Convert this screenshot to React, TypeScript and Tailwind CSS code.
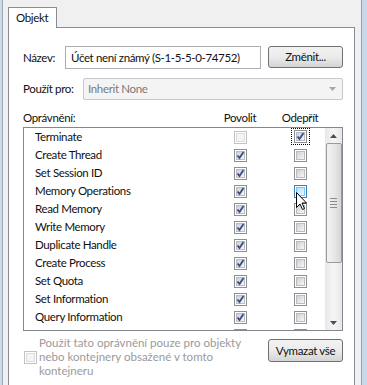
import React from "react";

type CbProps = { checked?: boolean; disabled?: boolean; hover?: boolean; focus?: boolean };

function Cb({ checked, disabled, hover, focus }: CbProps) {
  const outer = disabled ? "border-[#c2c2c2]" : hover ? "border-[#3c7fb1]" : "border-[#8e8f8f]";
  const inner = disabled
    ? "bg-[#f4f4f4] border-[#dcdcdc]"
    : hover
    ? "bg-gradient-to-br from-[#b1dffd] to-[#e9f7fe] border-[#79c6f9]"
    : "bg-gradient-to-br from-[#cdd0d6] to-[#f7f7f7] border-[#b9bdc3]";
  const box = (
    <div className={`relative w-[13px] h-[13px] border bg-white ${outer} flex items-center justify-center`}>
      <div className={`w-[9px] h-[9px] border ${inner}`} />
      {checked && (
        <svg className="absolute left-0 top-0" width="11" height="11" viewBox="0 0 11 11">
          <path d="M2.5 5.5 L4.5 8 L8.5 2" fill="none" stroke="#3b4f86" strokeWidth="1.9" strokeLinejoin="miter" />
        </svg>
      )}
    </div>
  );
  if (focus) {
    return <div className="border border-dotted border-black px-[2px] py-[1px]">{box}</div>;
  }
  return box;
}

const rows: { name: string; allow: boolean; allowDisabled?: boolean; deny: boolean; focus?: boolean; hover?: boolean }[] = [
  { name: "Terminate", allow: false, allowDisabled: true, deny: true, focus: true },
  { name: "Create Thread", allow: true, deny: false },
  { name: "Set Session ID", allow: true, deny: false },
  { name: "Memory Operations", allow: true, deny: false, hover: true },
  { name: "Read Memory", allow: true, deny: false },
  { name: "Write Memory", allow: true, deny: false },
  { name: "Duplicate Handle", allow: true, deny: false },
  { name: "Create Process", allow: true, deny: false },
  { name: "Set Quota", allow: true, deny: false },
  { name: "Set Information", allow: true, deny: false },
  { name: "Query Information", allow: true, deny: false },
  { name: "Query Limited Information", allow: false, deny: false },
];

export default function App() {
  const font = { fontFamily: "Lato, 'Open Sans', sans-serif" };
  return (
    <div className="w-[367px] h-[385px] bg-[#f0f0f0] flex overflow-hidden text-[11.5px] tracking-[-0.35px] text-[#111] leading-none" style={font}>
      {/* left frame */}
      <div className="w-[3px] h-full bg-[#cfdbe9] border-r border-[#9ca8b6] shrink-0" />
      <div className="flex-1 flex flex-col pl-[5px] pt-[7px]">
        {/* tab row */}
        <div className="flex h-[21px]">
          <div className="w-[49px] h-[21px] bg-white border border-b-0 border-[#898c95] flex items-center pl-[7px] relative z-10">
            Objekt
          </div>
        </div>
        {/* panel */}
        <div className="-mt-px w-[347px] flex-1 bg-white border border-[#898c95] border-b-0 pl-[14px] pr-[11px] pt-[18px] flex flex-col">
          {/* Název row */}
          <div className="flex items-center h-[23px]">
            <div className="w-[42px]">Název:</div>
            <div className="w-[196px] h-[23px] border border-[#abadb3] flex items-center pl-[5px] whitespace-nowrap">
              Účet není známý (S-1-5-5-0-74752)
            </div>
            <div className="ml-[7px] w-[75px] h-[22px] rounded-[3px] border border-[#707070] bg-gradient-to-b from-[#f2f2f2] via-[#ebebeb] to-[#d4d4d4] flex items-center justify-center self-start">
              Změnit...
            </div>
          </div>
          {/* Použít pro row */}
          <div className="flex items-center h-[22px] mt-[9px]">
            <div className="w-[60px] whitespace-nowrap">Použít pro:</div>
            <div className="flex-1 h-[22px] border border-[#c5c8cc] rounded-[2px] bg-[#f4f4f4] flex items-center justify-between pl-[4px] pr-[6px] text-[#7a7a7a]">
              <span>Inherit None</span>
              <svg width="7" height="4" viewBox="0 0 7 4">
                <path d="M0 0 L7 0 L3.5 4 Z" fill="#a8a8a8" />
              </svg>
            </div>
          </div>
          {/* header */}
          <div className="flex items-center h-[18px] mt-[9px] relative">
            <span>Oprávnění:</span>
            <span className="absolute left-[187px] w-[60px] text-center">Povolit</span>
            <span className="absolute left-[247px] w-[60px] text-center">Odepřít</span>
          </div>
          {/* list */}
          <div className="w-[320px] h-[204px] border border-[#828790] flex overflow-hidden">
            <div className="flex-1 flex flex-col overflow-hidden">
              {rows.map((r, i) => (
                <div key={i} className="h-[18px] shrink-0 flex items-center relative">
                  <span className="pl-[11px] whitespace-nowrap">{r.name}</span>
                  <div className="absolute left-[210px] top-[3px]">
                    <Cb checked={r.allow} disabled={r.allowDisabled} />
                  </div>
                  <div className={`absolute ${r.focus ? "left-[267px] top-[0px]" : "left-[270px] top-[3px]"}`}>
                    <Cb checked={r.deny} hover={r.hover} focus={r.focus} />
                  </div>
                </div>
              ))}
            </div>
            {/* scrollbar */}
            <div className="w-[17px] h-full bg-gradient-to-r from-[#e7e7e7] via-[#f5f5f5] to-[#e7e7e7] flex flex-col items-center">
              <div className="h-[15px] w-full flex items-center justify-center">
                <svg width="7" height="4" viewBox="0 0 7 4">
                  <path d="M0 4 L7 4 L3.5 0 Z" fill="#4d4d4d" />
                </svg>
              </div>
              <div className="w-[16px] h-[120px] rounded-[2px] border border-[#9a9a9a] bg-gradient-to-r from-[#f3f3f3] via-[#e8e8e8] to-[#d6d6d6] flex flex-col items-center justify-center gap-[2px]">
                <div className="w-[7px] h-px bg-[#8c8c8c]" />
                <div className="w-[7px] h-px bg-[#8c8c8c]" />
                <div className="w-[7px] h-px bg-[#8c8c8c]" />
                <div className="w-[7px] h-px bg-[#8c8c8c]" />
              </div>
              <div className="flex-1" />
              <div className="h-[15px] w-full flex items-center justify-center">
                <svg width="7" height="4" viewBox="0 0 7 4">
                  <path d="M0 0 L7 0 L3.5 4 Z" fill="#4d4d4d" />
                </svg>
              </div>
            </div>
          </div>
          {/* bottom */}
          <div className="flex mt-[5px]">
            <div className="flex items-center">
              <div className="ml-px">
                <Cb disabled />
              </div>
            </div>
            <div className="ml-[2px] text-[#9a9a9a] leading-[14px] tracking-normal whitespace-nowrap">
              Použít tato oprávnění pouze pro objekty
              <br />
              nebo kontejnery obsažené v tomto
              <br />
              kontejneru
            </div>
            <div className="flex-1" />
            <div className="mt-[3px] w-[75px] h-[23px] rounded-[3px] border border-[#707070] bg-gradient-to-b from-[#f2f2f2] via-[#ebebeb] to-[#d4d4d4] flex items-center justify-center">
              Vymazat vše
            </div>
          </div>
        </div>
      </div>
      {/* right frame */}
      <div className="w-[6px] h-full flex shrink-0">
        <div className="w-px bg-[#a0a0a0]" />
        <div className="flex-1 bg-[#c8d9ec]" />
      </div>
      {/* cursor */}
      <svg className="absolute left-[296px] top-[192px]" width="12" height="19" viewBox="0 0 12 19">
        <path d="M0.5 0.5 L0.5 15.5 L4 12 L6.5 17.5 L8.5 16.5 L6 11 L10.5 11 Z" fill="white" stroke="black" strokeWidth="1" />
      </svg>
    </div>
  );
}
